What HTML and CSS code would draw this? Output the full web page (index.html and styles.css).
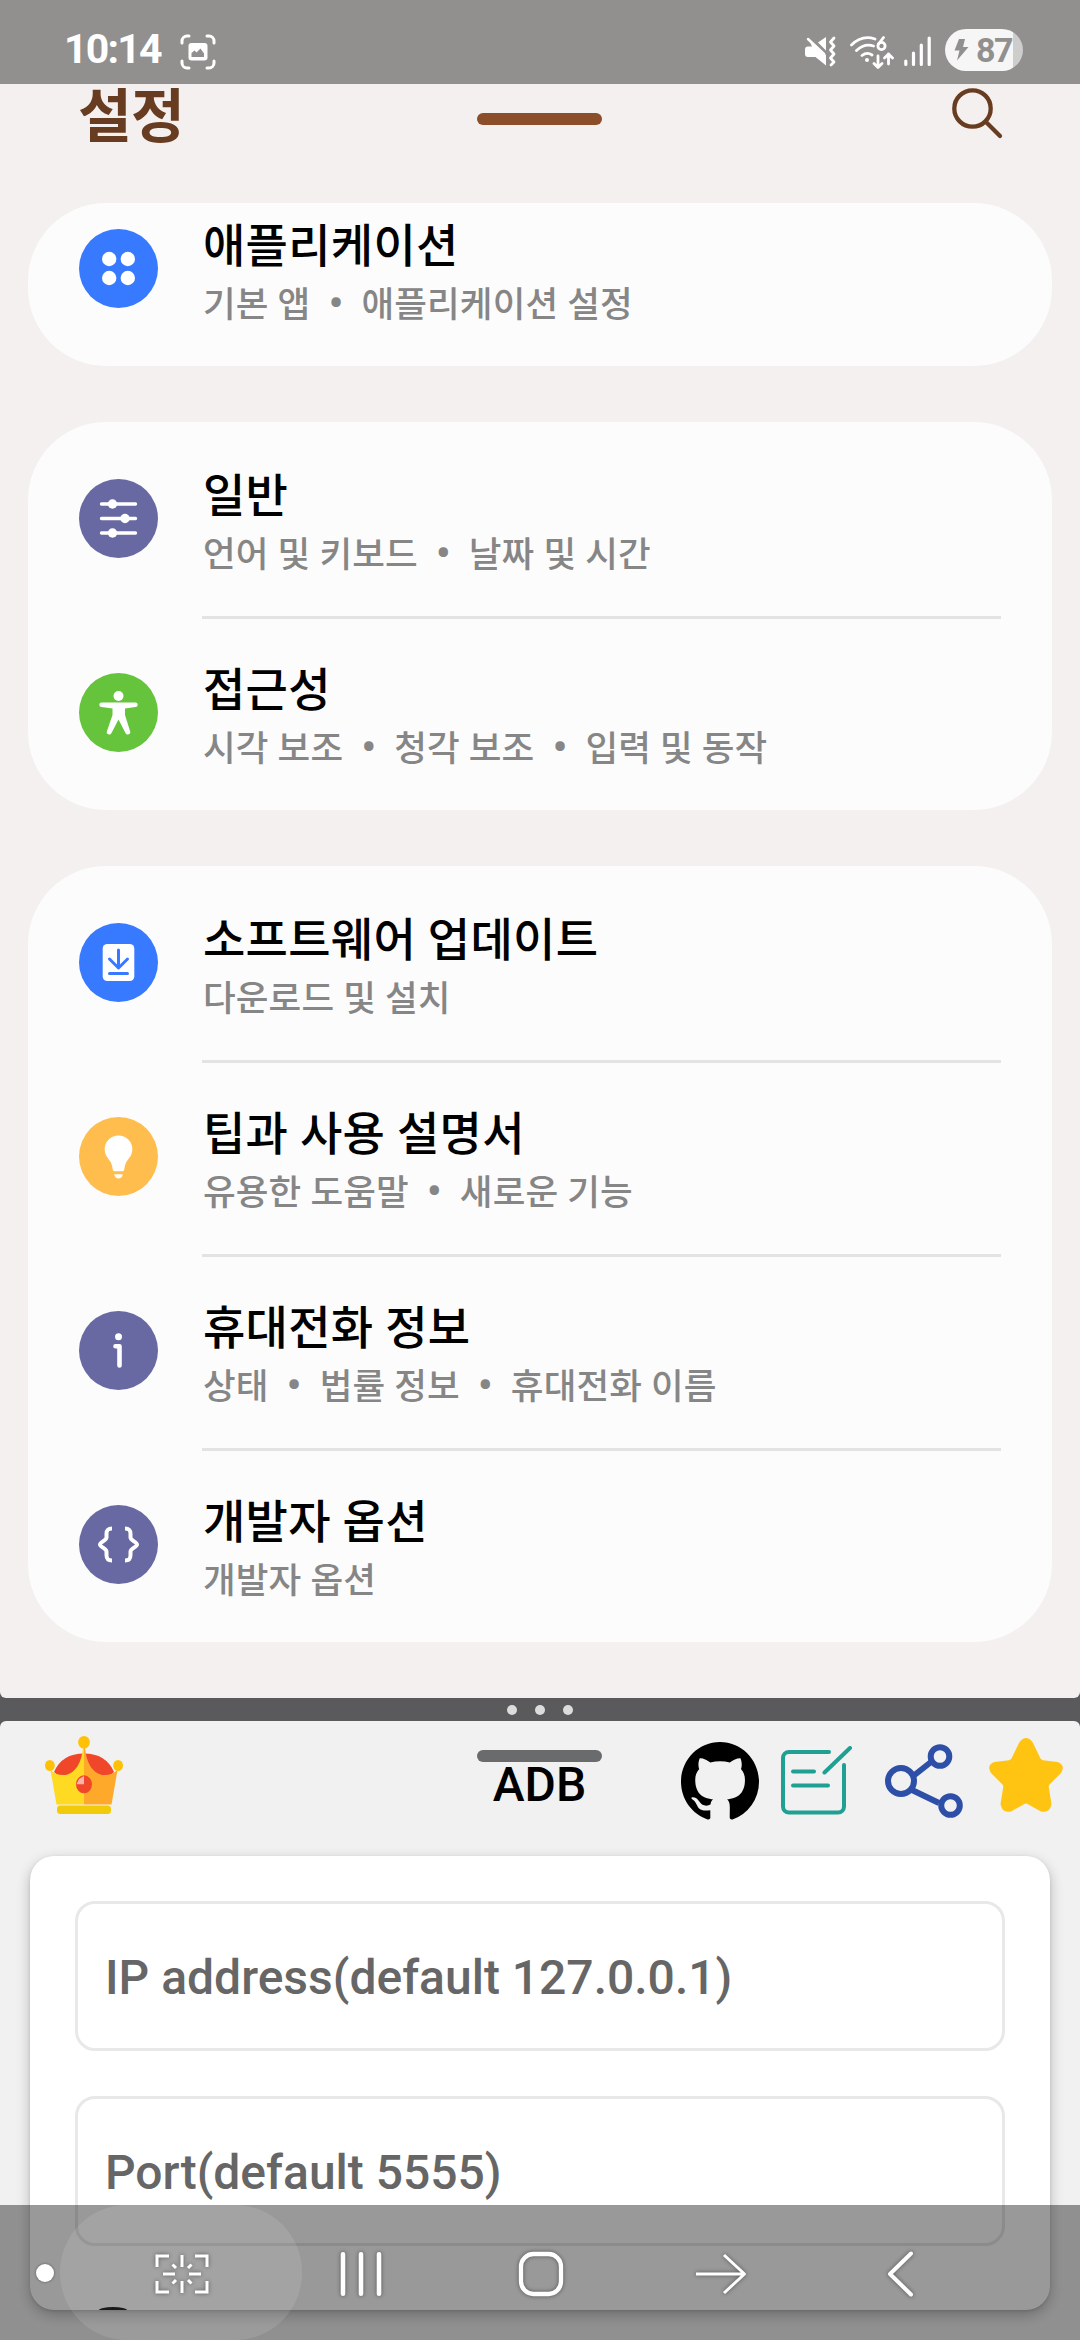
FILE: index.html
```html
<!DOCTYPE html>
<html lang="ko">
<head>
<meta charset="utf-8">
<title>설정</title>
<link rel="stylesheet" href="styles.css">
</head>
<body>
<div class="screen">
  <header class="status">
    <span class="clock">10:14</span>
    <svg class="shot" width="36" height="36" viewBox="0 0 36 36" fill="none" stroke="#fff" stroke-width="3" stroke-linecap="round">
      <path d="M2 9V7a5 5 0 0 1 5-5h2M27 2h2a5 5 0 0 1 5 5v2M34 27v2a5 5 0 0 1-5 5h-2M9 34H7a5 5 0 0 1-5-5v-2"/>
      <rect x="8.5" y="9" width="19" height="17.500" rx="3" fill="#fff" stroke="none"/>
      <path d="M11.500 23v-4l3-2.500 2 2 4-4 3.500 5v3.500z" fill="#91908e" stroke="none"/>
    </svg>
    <div class="status-icons">
      <svg width="31" height="31" viewBox="0 0 31 31">
        <path d="M3.500 2.500L21 19V29.500L10.500 21H3a3 3 0 0 1-3-3v-4.500a3 3 0 0 1 3-3h4zM21 1v13.500L13 6.500z" fill="#fff"/>
        <path d="M3 3L19 18" stroke="#fff" stroke-width="2.500" stroke-linecap="round"/>
        <path d="M29 2l-3.500 4 3.500 4-3.500 4 3.500 4-3.500 4 3.500 4-3 3" fill="none" stroke="#fff" stroke-width="2.800" stroke-linejoin="round" stroke-linecap="round"/>
      </svg>
      <svg class="wifi" width="44" height="33" viewBox="0 0 44 33" fill="none" stroke="#fff" stroke-width="2.800" stroke-linecap="round" stroke-linejoin="round">
        <path d="M1.500 9Q12 -1.500 25 3M6.500 14.500Q14.500 7 23.500 10M12 19.500Q17 15.500 22 19"/>
        <circle cx="17" cy="24" r="2" fill="#fff" stroke="none"/>
        <path d="M33.500 1.500L28.500 8"/><circle cx="31.500" cy="10" r="3.600"/>
        <path d="M28 20v11M24 27.500l4 4 4-4M38.500 28V18M34.500 22l4-4 4 4"/>
      </svg>
      <svg class="signal" width="27" height="31" viewBox="0 0 27 31" fill="none" stroke="#fff" stroke-width="3.200" stroke-linecap="round">
        <path d="M1.800 25v3.500M9.500 17v11.500M17.300 9v19.500M25.200 2v26.500"/>
      </svg>
      <div class="battery">
        <svg width="15" height="22" viewBox="0 0 15 22"><path d="M5 0L0.500 11.500H5.500L3 21.500L14.500 8H9L11 0z" fill="#91908e"/></svg>
        <span>87</span>
      </div>
    </div>
  </header>

  <section class="settings">
    <div class="topbar">
      <h1>설정</h1>
      <i class="handle"></i>
      <svg class="search" width="52" height="52" viewBox="0 0 52 52" fill="none" stroke="#683c20" stroke-width="4.300" stroke-linecap="round"><circle cx="20.500" cy="20.500" r="18.200"/><path d="M34 34L48 48"/></svg>
    </div>

    <div class="card clipped">
      <div class="row">
        <svg class="ic" viewBox="0 0 79 79"><circle cx="39.500" cy="39.500" r="39.500" fill="#387aff"/><g fill="#fff"><circle cx="30.200" cy="30" r="7.200"/><circle cx="48.800" cy="30" r="7.200"/><circle cx="30.200" cy="49" r="7.200"/><circle cx="48.800" cy="49" r="7.200"/></g></svg>
        <div class="txt"><h2>애플리케이션</h2><p>기본 앱<b>•</b>애플리케이션 설정</p></div>
      </div>
    </div>

    <div class="card">
      <div class="row">
        <svg class="ic" viewBox="0 0 79 79"><circle cx="39.500" cy="39.500" r="39.500" fill="#6869a2"/><g stroke="#fff" stroke-width="3.400" stroke-linecap="round"><path d="M22.500 25H56.500M22.500 39.500H56.500M22.500 54H56.500"/></g><g fill="#fff"><circle cx="33.500" cy="25" r="4.700"/><circle cx="46" cy="39.500" r="4.700"/><circle cx="33.500" cy="54" r="4.700"/></g></svg>
        <div class="txt"><h2>일반</h2><p>언어 및 키보드<b>•</b>날짜 및 시간</p></div>
      </div>
      <div class="row">
        <svg class="ic" viewBox="0 0 79 79"><circle cx="39.500" cy="39.500" r="39.500" fill="#65c43b"/><g fill="#fff"><circle cx="39.500" cy="23" r="5"/><path d="M22.500 29.500H56.500a2.200 2.200 0 0 1 0 4.400L46 35.500V42L51 58a2.400 2.400 0 0 1-4.500 2L39.500 46.500L32.500 60a2.400 2.400 0 0 1-4.500-2L33.500 42V35.500L22.500 33.900a2.200 2.200 0 0 1 0-4.400z"/></g></svg>
        <div class="txt"><h2>접근성</h2><p>시각 보조<b>•</b>청각 보조<b>•</b>입력 및 동작</p></div>
      </div>
    </div>

    <div class="card">
      <div class="row">
        <svg class="ic" viewBox="0 0 79 79"><circle cx="39.500" cy="39.500" r="39.500" fill="#387aff"/><rect x="23.700" y="21" width="31.600" height="37" rx="4.500" fill="#fff"/><path d="M39.500 27V44M30.500 36l9 9 9-9M30.500 50.500h18" fill="none" stroke="#387aff" stroke-width="3" stroke-linecap="round" stroke-linejoin="round"/></svg>
        <div class="txt"><h2>소프트웨어 업데이트</h2><p>다운로드 및 설치</p></div>
      </div>
      <div class="row">
        <svg class="ic" viewBox="0 0 79 79"><circle cx="39.500" cy="39.500" r="39.500" fill="#ffbd4e"/><path d="M39.500 18.500a13.800 13.800 0 0 1 13.800 13.800c0 6-3.500 9-5.800 12.500-1.500 2.500-2 6-2.300 8-.200 1-.700 1.400-1.500 1.400h-8.400c-.800 0-1.300-.400-1.500-1.400-.300-2-.800-5.500-2.300-8-2.300-3.500-5.800-6.500-5.800-12.500a13.800 13.800 0 0 1 13.800-13.800zM35.300 57.200h8.400c0 2.400-2 4.300-4.200 4.300s-4.200-1.900-4.200-4.300z" fill="#fff"/></svg>
        <div class="txt"><h2>팁과 사용 설명서</h2><p>유용한 도움말<b>•</b>새로운 기능</p></div>
      </div>
      <div class="row">
        <svg class="ic" viewBox="0 0 79 79"><circle cx="39.500" cy="39.500" r="39.500" fill="#6869a2"/><circle cx="39.500" cy="25.800" r="3.500" fill="#fff"/><path d="M36.500 35.200H40.500V54.500" fill="none" stroke="#fff" stroke-width="4.600" stroke-linecap="round" stroke-linejoin="round"/></svg>
        <div class="txt"><h2>휴대전화 정보</h2><p>상태<b>•</b>법률 정보<b>•</b>휴대전화 이름</p></div>
      </div>
      <div class="row">
        <svg class="ic" viewBox="0 0 79 79"><circle cx="39.500" cy="39.500" r="39.500" fill="#6869a2"/><path d="M33 23.500C28.500 23.500 27.500 25.500 27.500 29V32.500C27.500 35.500 21 37 21 39.500S27.500 43.500 27.500 46.500V50C27.500 53.500 28.500 55.500 33 55.500M46 23.500C50.500 23.500 51.500 25.500 51.500 29V32.500C51.500 35.500 58 37 58 39.500S51.500 43.500 51.500 46.500V50C51.500 53.500 50.500 55.500 46 55.500" fill="none" stroke="#fff" stroke-width="4"/></svg>
        <div class="txt"><h2>개발자 옵션</h2><p>개발자 옵션</p></div>
      </div>
    </div>
  </section>

  <div class="split"><i></i><i></i><i></i></div>

  <section class="adb">
    <div class="appbar">
      <svg class="crown" width="78" height="78" viewBox="0 0 78 78">
        <path d="M9 36Q17 17.500 39 17.500T69 36L60 44H18z" fill="#f0472a"/>
        <path d="M5.500 34C9 37.500 14 39.500 20 39C30 38 37.500 26 38 10H39V68.500H11.500z" fill="#ffda22"/>
        <path d="M72.500 34C69 37.500 64 39.500 58 39C48 38 40.500 26 40 10H39V68.500H66.500z" fill="#ffa92a"/>
        <rect x="12" y="69.500" width="54" height="8.500" rx="3.500" fill="#f1ca0a"/>
        <g fill="#ffc107"><ellipse cx="39" cy="6.300" rx="5.800" ry="6.300"/><ellipse cx="4.900" cy="29.500" rx="4.900" ry="5.500"/><ellipse cx="73.100" cy="29.500" rx="4.900" ry="5.500"/></g>
        <ellipse cx="39" cy="48.300" rx="8" ry="9" fill="#f0472a"/><path d="M39 40V48.300H31.500L34 43z" fill="#fbb5a8"/>
      </svg>
      <div class="apptitle"><i class="handle gray"></i><span>ADB</span></div>
      <svg class="github" width="78" height="78" viewBox="0 0 16 15.700" preserveAspectRatio="none"><path d="M8 0C3.580 0 0 3.580 0 8c0 3.540 2.290 6.530 5.470 7.590.400.070.550-.170.550-.380 0-.190-.010-.820-.010-1.490-2.010.370-2.530-.490-2.690-.940-.090-.230-.480-.940-.820-1.130-.280-.150-.680-.520-.010-.530.630-.010 1.080.580 1.230.820.720 1.210 1.870.870 2.330.660.070-.520.280-.870.510-1.070-1.780-.200-3.640-.890-3.640-3.950 0-.870.310-1.590.820-2.150-.080-.200-.360-1.020.080-2.120 0 0 .670-.210 2.200.820.640-.180 1.320-.270 2-.270s1.360.090 2 .270c1.530-1.040 2.200-.820 2.200-.820.440 1.100.160 1.920.080 2.120.510.560.820 1.270.820 2.150 0 3.070-1.870 3.750-3.650 3.950.290.250.540.730.540 1.480 0 1.070-.010 1.930-.010 2.200 0 .210.150.460.550.380A8.010 8.010 0 0 0 16 8c0-4.420-3.580-8-8-8z"/></svg>
      <svg class="note" width="72" height="70" viewBox="0 0 72 70" fill="none" stroke="#209f93" stroke-width="4" stroke-linecap="round" stroke-linejoin="round"><path d="M48 6H8a6 6 0 0 0-6 6V60.500a6 6 0 0 0 6 6H57a6 6 0 0 0 6-6V19M12 25.500H33M12 39.500H47M43.500 26.500L69 2"/></svg>
      <svg class="share" width="78" height="74" viewBox="0 0 78 74" fill="none" stroke="#2d4fa8" stroke-width="6"><path d="M27 33L46 18M27 46L54 59"/><circle cx="16" cy="37" r="13"/><circle cx="55" cy="12.500" r="9.300"/><circle cx="65.500" cy="61.500" r="9.300"/></svg>
      <svg class="star" width="74" height="75" viewBox="0 0 74 75"><path d="M30.500 4Q37 -4 43.500 4L51.500 20.500Q52.300 21.800 54 22.200L68.500 24Q77 27 72 35L60.500 46.500Q59.500 47.800 59.800 49.500L62.500 66Q61 75.500 52 73.500L38.500 66Q37 65 35.500 66L22 73.500Q13 75.500 11.500 66L14.200 49.500Q14.500 47.800 13.500 46.500L2 35Q-3 27 5.500 24L20 22.200Q21.700 21.800 22.500 20.500z" fill="#ffc412"/></svg>
    </div>
    <div class="form">
      <div class="field">IP address(default 127.0.0.1)</div>
      <div class="field">Port(default 5555)</div>
      <i class="peek"></i>
    </div>
  </section>

  <nav class="nav">
    <i class="dot"></i>
    <div class="pill">
      <svg width="56" height="42" viewBox="0 0 56 42" fill="none" stroke="#fff" stroke-width="3"><path d="M3 14V3H15M41 3H53V14M53 28V39H41M15 39H3V28M28 2V14M28 28V40M9 21H21M35 21H47M18.500 11.500L22 15M37.500 11.500L34 15M18.500 30.500L22 27M37.500 30.500L34 27"/></svg>
    </div>
    <svg class="recents" width="42" height="46" viewBox="0 0 42 46" stroke="#fff" stroke-width="4.600" stroke-linecap="round"><path d="M3 3.300V42.700M21 3.300V42.700M39 3.300V42.700"/></svg>
    <svg class="home" width="46" height="46" viewBox="0 0 46 46" fill="none" stroke="#fff" stroke-width="4.300"><rect x="3" y="3" width="40" height="40" rx="12.500"/></svg>
    <svg class="fwd" width="52" height="42" viewBox="0 0 52 42" fill="none" stroke="#fff" stroke-width="3"><path d="M1 21H50M29 2L49.500 21L29 40" stroke-linejoin="round"/></svg>
    <svg class="back" width="28" height="48" viewBox="0 0 28 48" fill="none" stroke="#fff" stroke-width="4" stroke-linecap="round" stroke-linejoin="round"><path d="M25 3.500L4 24L25 44.500"/></svg>
  </nav>
</div>
</body>
</html>
```
FILE: styles.css
```css
* { box-sizing: border-box; margin: 0; padding: 0; }
body { width: 1080px; height: 2340px; overflow: hidden; background: #5a5a5c; font-family: Roboto, "Noto Sans CJK KR", sans-serif; }
svg { display: block; flex: none; }
.screen { position: relative; width: 1080px; height: 2340px; display: flex; flex-direction: column; overflow: hidden; }

.status { height: 84px; flex: none; background: #91908e; color: #fff; display: flex; align-items: flex-start; padding: 0 57px 0 64px; }
.clock { font-size: 41px; line-height: 48px; font-weight: 700; letter-spacing: -1.8px; margin-top: 25px; width: 116px; }
.shot { margin-top: 34px; }
.status-icons { margin-left: auto; display: flex; align-items: flex-start; padding-top: 29px; }
.status-icons > svg { margin-top: 7px; }
.wifi { margin-left: 14px; }
.signal { margin-left: 10px; }
.battery { margin-left: 14px; width: 78px; height: 42px; border-radius: 21px; background: linear-gradient(90deg, #f6f6f6 0 68px, #cdcdcd 68px); display: flex; align-items: center; padding-left: 9px; gap: 7px; color: #91908e; font-size: 34px; line-height: 43px; font-weight: 700; letter-spacing: -1.5px; }

.settings { height: 1614px; flex: none; background: #f4f0ef; border-radius: 0 0 6px 6px; padding: 0 28px; display: flex; flex-direction: column; }
.topbar { height: 119px; display: flex; align-items: flex-start; justify-content: space-between; padding: 0 48px 0 50px; }
h1 { width: 399px; margin-top: -10px; font-size: 58.5px; line-height: 86px; font-weight: 700; color: #683c20; letter-spacing: -.8px; }
.handle { width: 125px; height: 12px; border-radius: 6px; background: #8b4e28; margin: 29px 0 0; }
.search { margin: 4px 0 0 350px; }
.card { background: #fcfcfc; border-radius: 78px; flex: none; margin-bottom: 56px; }
.clipped { height: 163px; overflow: hidden; display: flex; flex-direction: column; justify-content: flex-end; }
.row { height: 194px; flex: none; display: flex; padding: 0 51px; gap: 44px; }
.ic { width: 79px; height: 79px; margin-top: 57px; }
.txt { flex: 1; padding: 39px 0 0 1px; border-top: 3px solid transparent; white-space: nowrap; }
.row + .row .txt { border-top-color: #e3e3e4; }
h2 { font-size: 46px; line-height: 64px; font-weight: 500; color: #000; letter-spacing: .3px; margin-bottom: 2px; }
.txt p { font-size: 35.5px; line-height: 50px; font-weight: 500; color: #868686; letter-spacing: .15px; }
.txt b { display: inline-block; width: 51px; text-align: center; font-weight: 700; font-size: 40px; line-height: 40px; }

.split { height: 23px; flex: none; display: flex; justify-content: center; align-items: center; gap: 18px; }
.split i { width: 10px; height: 10px; border-radius: 50%; background: #dcdcdc; }

.adb { flex: 1; background: #f1f1f1; border-radius: 6px 6px 0 0; padding: 0 30px; }
.appbar { height: 135px; display: flex; align-items: flex-start; margin-right: -30px; padding-left: 15px; }
.crown { margin-top: 15px; }
.apptitle { margin-left: 354px; width: 125px; display: flex; flex-direction: column; align-items: center; font-size: 48px; line-height: 56px; font-weight: 500; color: #000; }
.gray { background: #6a6b6d; }
.apptitle span { margin-top: -5px; }
.github { margin: 21px 0 0 79px; }
.note { margin: 25px 0 0 22px; }
.share { margin: 23px 0 0 32px; }
.star { margin: 17px 0 0 26px; }
.form { position: relative; height: 454px; background: #fff; border-radius: 24px; padding: 45px; display: flex; flex-direction: column; gap: 45px; box-shadow: 0 5px 14px rgba(0,0,0,.24), 0 1px 3px rgba(0,0,0,.12); }
.field { height: 150px; flex: none; border: 3px solid #e8e8e8; border-radius: 20px; padding-left: 27px; font-size: 48px; line-height: 148px; font-weight: 500; color: #666; white-space: nowrap; }
.peek { position: absolute; left: 69px; bottom: 0; width: 28px; height: 3px; border-radius: 14px 14px 0 0 / 3px 3px 0 0; background: #000; }

.nav { position: absolute; left: 0; bottom: 0; width: 1080px; height: 135px; background: rgba(0,0,0,.4); display: flex; align-items: center; padding-left: 36px; }
.nav svg { filter: drop-shadow(0 0 2px rgba(0,0,0,.45)); }
.dot { width: 18px; height: 18px; border-radius: 50%; background: #fff; box-shadow: 0 0 2px 1px rgba(0,0,0,.2); }
.pill { margin-left: 6px; width: 242px; height: 135px; border-radius: 67px; background: rgba(255,255,255,.1); display: flex; align-items: center; justify-content: center; padding: 3px 0 0 2px; }
.recents { margin-left: 38px; }
.home { margin-left: 136px; }
.fwd { margin-left: 131px; }
.back { margin-left: 139px; }
.recents, .home, .back, .fwd { position: relative; top: 1px; }
```
